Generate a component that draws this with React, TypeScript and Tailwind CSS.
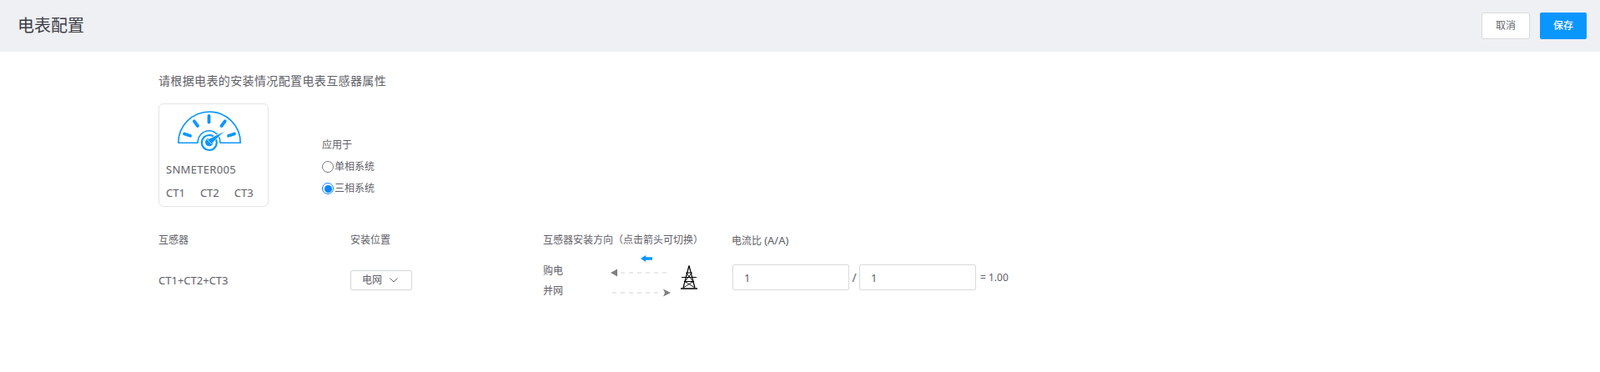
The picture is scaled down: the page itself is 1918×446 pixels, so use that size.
const font = { fontFamily: '"Noto Sans", "Noto Sans CJK SC", sans-serif' };

function MeterIcon() {
  return (
    <svg width="76" height="50" viewBox="0 0 76 50" fill="none" className="text-[#0a96ff]">
      {/* dial outline */}
      <path
        d="M0.8 38.2 A37.2 37.2 0 0 1 75.2 38.2 H51 A13.5 14.5 0 0 0 24 38.2 Z"
        stroke="currentColor"
        strokeWidth="1.6"
        strokeLinejoin="round"
      />
      {/* ticks */}
      <g stroke="currentColor" strokeWidth="3.8" strokeLinecap="round">
        <path d="M8 27.5 L15 29.8" />
        <path d="M19.8 12.3 L24 18" />
        <path d="M37.5 6 V13.5" />
        <path d="M56.7 12.3 L52.5 18" />
        <path d="M68 27.5 L61 29.8" />
      </g>
      {/* center */}
      <circle cx="37.8" cy="38" r="9" stroke="currentColor" strokeWidth="2.2" fill="#fff" />
      <circle cx="37.8" cy="37.5" r="4.8" fill="currentColor" />
      <path d="M35.5 34.5 L56.5 24 L40.5 39.5 Z" fill="currentColor" stroke="#fff" strokeWidth="0.7" />
    </svg>
  );
}

function Tower() {
  return (
    <svg width="20" height="29" viewBox="0 0 20 29" fill="none" stroke="#000" strokeWidth="1.2">
      <path d="M10 0.5 L3 27 M10 0.5 L17 27" />
      <path d="M0 28 H20" strokeWidth="1.5" />
      <path d="M1 14.5 H19 M4 19.5 H16 M6.5 9 H13.5" />
      <path d="M6.5 9 L15 19.5 M13.5 9 L5 19.5 M5 19.5 L17 27 M15 19.5 L3 27" strokeWidth="0.9" />
    </svg>
  );
}

function ArrowLine({ dir }: { dir: "left" | "right" }) {
  return (
    <svg width="72" height="10" viewBox="0 0 72 10" fill="none" className="mt-1">
      {dir === "left" ? (
        <>
          <path d="M0 5 L8 0.5 V9.5 Z" fill="#808080" />
          <path d="M12 5 H68" stroke="#d4d4d4" strokeWidth="1.2" strokeDasharray="5 5" />
        </>
      ) : (
        <>
          <path d="M2 5 H60" stroke="#d4d4d4" strokeWidth="1.2" strokeDasharray="5 5" />
          <path d="M72 5 L63 0.5 L65 5 L63 9.5 Z" fill="#808080" />
        </>
      )}
    </svg>
  );
}

function Radio({ checked, label }: { checked?: boolean; label: string }) {
  return (
    <label className="flex items-center h-[26px] text-xs text-[#5f6068]">
      <span
        className={
          checked
            ? "w-[14px] h-[14px] rounded-full border border-[#0a84ff] flex items-center justify-center mr-px"
            : "w-[14px] h-[14px] rounded-full border border-[#77787e] flex items-center justify-center mr-px"
        }
      >
        {checked && <span className="w-[9px] h-[9px] rounded-full bg-[#0a84ff]" />}
      </span>
      {label}
    </label>
  );
}

export default function App() {
  return (
    <div className="min-h-[446px] bg-white text-[#5f6068]" style={font}>
      {/* Header */}
      <header className="h-[62px] bg-[#eff0f4] flex items-center justify-between pl-[21px] pr-4">
        <h1 className="text-xl font-normal text-[#3c3d45]">电表配置</h1>
        <div className="flex gap-3">
          <button className="w-[58px] h-8 bg-white border border-[#d9dadc] rounded-[2px] text-xs text-[#66676d]">
            取消
          </button>
          <button className="w-14 h-8 bg-[#0a96ff] rounded-[2px] text-xs font-medium text-white">保存</button>
        </div>
      </header>

      <main className="pl-[190px]">
        <p className="pt-[25px] text-sm leading-[19px] tracking-[0.37px]">请根据电表的安装情况配置电表互感器属性</p>

        <div className="flex mt-[18px]">
          {/* Meter card */}
          <div className="w-[132px] h-[124px] border border-[#e3e4e6] rounded-md px-2 pt-2">
            <div className="ml-[14px]">
              <MeterIcon />
            </div>
            <div className="mt-[11px] text-[13px] leading-[18px] tracking-[0.3px]">SNMETER005</div>
            <div className="flex gap-[18px] mt-[10px] text-[13px] leading-[18px]">
              <span>CT1</span>
              <span>CT2</span>
              <span>CT3</span>
            </div>
          </div>

          {/* Applied to */}
          <div className="ml-16 pt-[41px]">
            <div className="text-xs leading-[18px] mb-1">应用于</div>
            <Radio label="单相系统" />
            <Radio checked label="三相系统" />
          </div>
        </div>

        {/* CT table */}
        <div className="grid grid-cols-[230px_231px_226px_auto] mt-[31px] text-xs">
          <div className="leading-[18px]">互感器</div>
          <div className="leading-[18px]">安装位置</div>
          <div className="leading-[18px]">互感器安装方向（点击箭头可切换）</div>
          <div className="leading-[18px]">
            电流比 <span className="text-[13px]">(A/A)</span>
          </div>

          <div className="mt-[23px] flex items-center h-8 text-[13px]">CT1+CT2+CT3</div>
          <div className="mt-[22px] flex items-center h-8">
            <div className="w-[74px] h-6 border border-[#d5d6d9] rounded-[2px] flex items-center gap-[9px] pl-[13px]">
              <span>电网</span>
              <svg width="10" height="6" viewBox="0 0 10 6" fill="none" stroke="#66676d" strokeWidth="1">
                <path d="M0.5 0.5 L5 5 L9.5 0.5" />
              </svg>
            </div>
          </div>
          <div className="mt-2 relative h-[55px] w-[185px]">
            <svg width="14" height="8" viewBox="0 0 14 8" className="absolute left-[117px] top-0">
              <path d="M0 4 L6 0 V2.2 H14 V5.8 H6 V8 Z" fill="#0a96ff" />
            </svg>
            <div className="flex items-center h-6 mt-[7px]">
              <span className="w-[81px]">购电</span>
              <ArrowLine dir="left" />
            </div>
            <div className="flex items-center h-6">
              <span className="w-[81px]">并网</span>
              <ArrowLine dir="right" />
            </div>
            <div className="absolute left-[165px] top-3">
              <Tower />
            </div>
          </div>
          <div className="mt-[19px] flex items-center h-[31px] text-[13px] pl-px">
            <input
              readOnly
              value="1"
              className="w-[140px] h-[31px] border border-[#d9dadc] rounded-[2px] pl-[13px] outline-none"
            />
            <span className="w-3 text-center text-sm">/</span>
            <input
              readOnly
              value="1"
              className="w-[140px] h-[31px] border border-[#d9dadc] rounded-[2px] pl-[13px] outline-none"
            />
            <span className="ml-[5px] text-xs">= 1.00</span>
          </div>
        </div>
      </main>
    </div>
  );
}
